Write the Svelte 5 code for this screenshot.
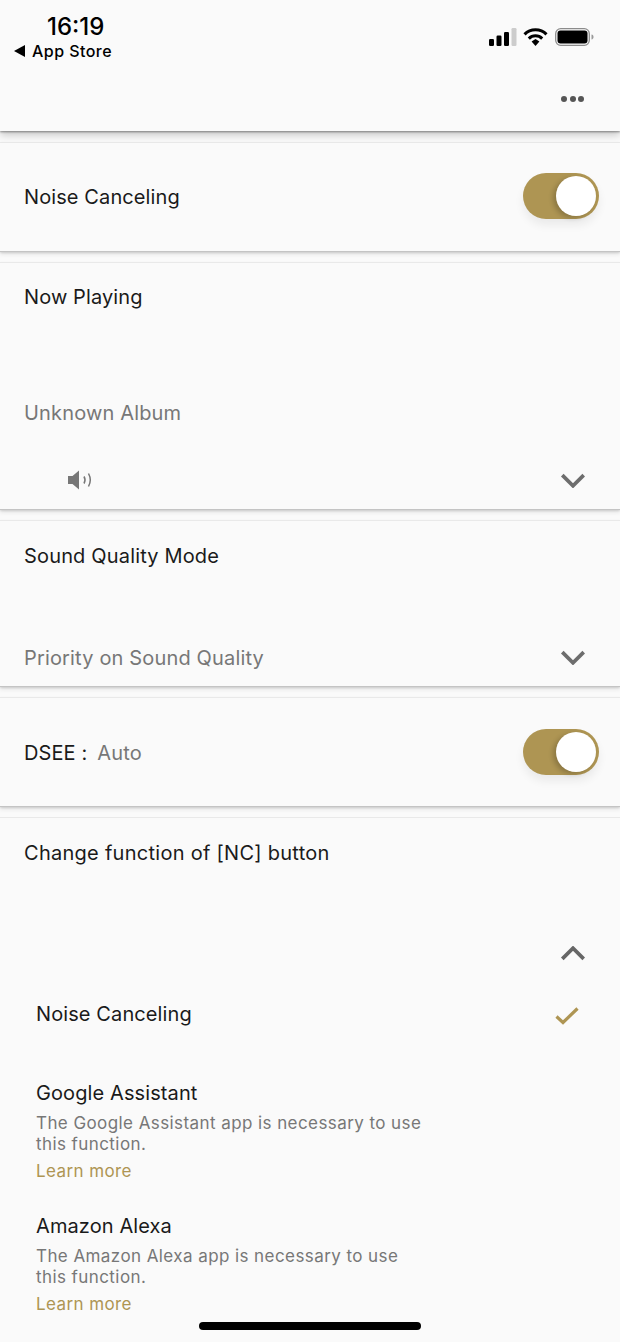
<script>
  const options = [
    { name: 'Google Assistant', text: 'The Google Assistant app is necessary to use this function.' },
    { name: 'Amazon Alexa', text: 'The Amazon Alexa app is necessary to use this function.' }
  ];
</script>

<main>
  <header>
    <div class="status">
      <div class="left">
        <div class="time">16:19</div>
        <div class="back"><span class="tri"></span>App Store</div>
      </div>
      <div class="icons">
        <svg width="28" height="18" viewBox="0 0 28 18">
          <rect x="0" y="11" width="5" height="7" rx="1.2" fill="#000" />
          <rect x="7.5" y="7.5" width="5" height="10.5" rx="1.2" fill="#000" />
          <rect x="15" y="4" width="5" height="14" rx="1.2" fill="#000" />
          <rect x="22.5" y="0" width="5" height="18" rx="1.2" fill="#ccc" />
        </svg>
        <svg class="wifi" width="25" height="18" viewBox="0 0 25 18">
          <path d="M1.500 6.400a15.500 15.500 0 0 1 22 0" fill="none" stroke="#000" stroke-width="3" />
          <path d="M5.800 10.600a9.500 9.500 0 0 1 13.400 0" fill="none" stroke="#000" stroke-width="3" />
          <path d="M8.600 13.600 12.500 11l3.900 2.600-3.900 4.400z" fill="#000" />
        </svg>
        <svg class="battery" width="39" height="18" viewBox="0 0 39 18">
          <rect x="0.7" y="0.7" width="33.6" height="16.6" rx="5" fill="none" stroke="#8c8c8c" stroke-width="1.300" />
          <rect x="2.500" y="2.500" width="30" height="13" rx="3" fill="#000" />
          <path d="M36.500 6.500c1.300.3 2 1.200 2 2.500s-.7 2.200-2 2.500z" fill="#999" />
        </svg>
      </div>
    </div>
    <div class="actions">
      <div class="dots"><i></i><i></i><i></i></div>
    </div>
  </header>

  <section class="toggle-row first">
    <span class="title">Noise Canceling</span>
    <div class="switch"><div class="knob"></div></div>
  </section>

  <section class="playing">
    <div class="title">Now Playing</div>
    <div class="sub album">Unknown Album</div>
    <div class="controls">
      <svg class="speaker" width="24" height="20" viewBox="0 0 24 20">
        <path d="M0 6h4.500L11 0.500v19L4.500 14H0z" fill="#777" />
        <path d="M16 6.500c1.200 2 1.200 5 0 7" fill="none" stroke="#777" stroke-width="1.500" />
        <path d="M20.500 3.500c2.200 4 2.200 9 0 13" fill="none" stroke="#777" stroke-width="1.500" />
      </svg>
      <svg class="chev" width="26" height="15" viewBox="0 0 24 14">
        <path d="M2 2l10 10L22 2" fill="none" stroke="#6d6d6d" stroke-width="3.400" />
      </svg>
    </div>
  </section>

  <section class="quality">
    <div class="title wider">Sound Quality Mode</div>
    <div class="controls">
      <span class="sub">Priority on Sound Quality</span>
      <svg class="chev lift" width="26" height="15" viewBox="0 0 24 14">
        <path d="M2 2l10 10L22 2" fill="none" stroke="#6d6d6d" stroke-width="3.400" />
      </svg>
    </div>
  </section>

  <section class="toggle-row">
    <span class="title down">DSEE :<span class="sub auto">Auto</span></span>
    <div class="switch"><div class="knob"></div></div>
  </section>

  <section class="nc">
    <div class="title wide">Change function of [NC] button</div>
    <div class="up">
      <svg class="chev" width="26" height="15" viewBox="0 0 24 14">
        <path d="M2 12L12 2l10 10" fill="none" stroke="#666" stroke-width="3.400" />
      </svg>
    </div>
    <div class="selected">
      <span class="title down">Noise Canceling</span>
      <svg class="check" width="24" height="18" viewBox="0 0 24 18">
        <path d="M1.500 9.500l6.500 6L22.500 1.500" fill="none" stroke="#ae9553" stroke-width="3.200" />
      </svg>
    </div>
    {#each options as o}
      <div class="option">
        <div class="title">{o.name}</div>
        <p>{o.text}</p>
        <div class="link">Learn more</div>
      </div>
    {/each}
  </section>

  <div class="home"></div>
</main>

<style>
  :global(body) {
    margin: 0;
    background: #fafafa;
  }

  main {
    position: relative;
    width: 620px;
    height: 1342px;
    overflow: hidden;
    background: #fafafa;
    font-family: Inter, Roboto, "Liberation Sans", sans-serif;
    color: #1a1a1a;
  }

  header {
    position: relative;
    height: 131px;
    background: #fafafa;
    box-shadow: 0 1px 2px #0006, 0 4px 8px #0003;
  }

  .status {
    display: flex;
    justify-content: space-between;
    height: 80px;
  }

  .left {
    padding: 13px 0 0 14px;
    color: #000;
  }

  .time {
    padding-left: 33px;
    font-size: 24px;
    line-height: 28px;
    font-weight: 500;
  }

  .back {
    display: flex;
    align-items: center;
    font-size: 16px;
    line-height: 20px;
    font-weight: 500;
    letter-spacing: 0.450px;
  }

  .tri {
    width: 0;
    height: 0;
    margin-right: 7px;
    border-top: 6px solid transparent;
    border-bottom: 6px solid transparent;
    border-right: 11px solid #000;
  }

  .icons {
    display: flex;
    align-items: flex-start;
    padding: 28px 26px 0 0;
  }

  .wifi {
    margin-left: 6px;
  }

  .battery {
    margin-left: 7px;
  }

  .actions {
    display: flex;
    justify-content: flex-end;
    padding: 16px 36px 0 0;
  }

  .dots {
    display: flex;
    gap: 2.500px;
  }

  .dots i {
    width: 6px;
    height: 6px;
    border-radius: 50%;
    background: #555;
  }

  section {
    box-sizing: border-box;
    background: #fafafa;
    border-top: 1px solid #e9e9e9;
    border-bottom: 1px solid #c4c4c4;
    box-shadow: 0 1px 2px #0002, 0 3px 4px #0001;
    margin-bottom: 10px;
  }

  .first {
    margin-top: 11px;
  }

  .first .switch {
    margin-bottom: 2px;
  }

  .title {
    font-size: 20px;
    line-height: 28px;
    letter-spacing: 0.100px;
  }

  .wide {
    letter-spacing: 0.270px;
  }

  .wider {
    letter-spacing: 0.160px;
  }

  .down {
    padding-top: 1px;
  }

  .sub {
    font-size: 20px;
    line-height: 28px;
    letter-spacing: 0.160px;
    color: #777;
  }

  .toggle-row {
    display: flex;
    justify-content: space-between;
    align-items: center;
    height: 110px;
    padding-left: 24px;
    padding-right: 21px;
  }

  .auto {
    margin-left: 10px;
  }

  .switch {
    box-sizing: border-box;
    display: flex;
    justify-content: flex-end;
    align-items: center;
    width: 76px;
    height: 46px;
    padding-right: 3px;
    border-radius: 23px;
    background: #ae9553;
    box-shadow: 0 6px 10px #0001;
  }

  .knob {
    width: 40px;
    height: 40px;
    border-radius: 50%;
    background: #fff;
    box-shadow: -3px 2px 5px #0003;
  }

  .playing {
    height: 248px;
    padding: 20px 34px 0 24px;
  }

  .album {
    margin-top: 88px;
  }

  .controls {
    display: flex;
    justify-content: space-between;
    align-items: center;
  }

  .playing .controls {
    margin-top: 43px;
    padding-left: 44px;
  }

  .quality {
    height: 167px;
    padding: 21px 34px 0 24px;
  }

  .quality .controls {
    margin-top: 74px;
  }

  .lift {
    margin-bottom: 2px;
  }

  .nc {
    height: 540px;
    padding: 21px 0 0 24px;
    border-bottom: 0;
    box-shadow: none;
  }

  .up {
    display: flex;
    justify-content: flex-end;
    margin-top: 79px;
    padding-right: 34px;
  }

  .selected {
    display: flex;
    justify-content: space-between;
    align-items: center;
    margin-top: 38px;
    padding: 0 41px 0 12px;
  }

  .check {
    position: relative;
    top: 2px;
  }

  .option {
    margin-top: 51px;
    padding-left: 12px;
    width: 390px;
  }

  .option + .option {
    margin-top: 30px;
  }

  p {
    margin: 6px 0 0;
    font-size: 17px;
    line-height: 21px;
    letter-spacing: 0.420px;
    color: #777;
  }

  .link {
    margin-top: 6px;
    font-size: 17px;
    line-height: 21px;
    letter-spacing: 0.400px;
    color: #ae9553;
  }

  .home {
    position: absolute;
    left: 199px;
    bottom: 12px;
    width: 222px;
    height: 8px;
    border-radius: 4px;
    background: #000;
  }
</style>
